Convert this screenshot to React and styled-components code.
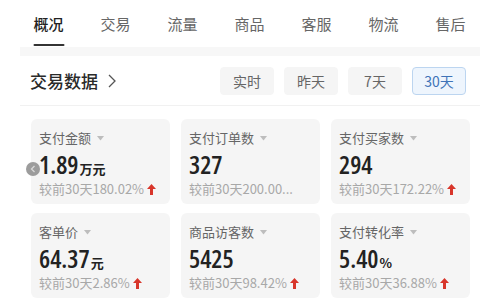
import React from "react";
import styled, { createGlobalStyle } from "styled-components";

const Global = createGlobalStyle`
  html, body { margin: 0; padding: 0; background: #fff; }
  body { font-family: "Noto Sans CJK SC", "Noto Sans", sans-serif; }
  * { box-sizing: border-box; }
`;

const Page = styled.div`
  position: relative;
  width: 480px;
  height: 300px;
  overflow: hidden;
  background: #fff;
`;

const Tabs = styled.div`
  display: flex;
  height: 47px;
  padding-left: 15px;
`;

const Tab = styled.div`
  position: relative;
  width: 67px;
  flex: none;
  display: flex;
  justify-content: center;
  align-items: center;
  padding-bottom: 1px;
  font-size: 15px;
  color: ${(p) => (p.$active ? "#222" : "#666")};
  font-weight: ${(p) => (p.$active ? 500 : 400)};
  &::after {
    content: "";
    display: ${(p) => (p.$active ? "block" : "none")};
    position: absolute;
    left: 50%;
    transform: translateX(-50%);
    bottom: 1px;
    width: 31px;
    height: 2px;
    border-radius: 1px;
    background: #333;
  }
`;

const Body = styled.div`
  margin-left: 20px;
  padding-top: 9px;
  background: #f7f7f7;
`;

const Section = styled.div`
  background: #fff;
  height: 244px;
`;

const Header = styled.div`
  display: flex;
  align-items: center;
  justify-content: space-between;
  height: 50px;
  padding: 0 14px 0 10px;
  border-bottom: 1px solid #f1f1f1;
`;

const Title = styled.div`
  display: flex;
  align-items: center;
  gap: 10px;
  font-size: 17px;
  font-weight: 500;
  color: #2a2a2a;
`;

const Periods = styled.div`
  display: flex;
  gap: 10px;
`;

const Period = styled.div`
  width: 54px;
  height: 28px;
  border-radius: 4px;
  display: flex;
  align-items: center;
  justify-content: center;
  font-size: 14px;
  background: ${(p) => (p.$active ? "#eef5fd" : "#f5f5f5")};
  border: 1px solid ${(p) => (p.$active ? "#bcd5f0" : "#f5f5f5")};
  color: ${(p) => (p.$active ? "#3f73b8" : "#666")};
`;

const Grid = styled.div`
  display: grid;
  grid-template-columns: repeat(3, 139px);
  grid-auto-rows: 85px;
  column-gap: 11px;
  row-gap: 9px;
  padding: 13px 0 0 11px;
`;

const Card = styled.div`
  background: #f5f5f5;
  border-radius: 6px;
  padding: 10px 8px 0 8px;
  display: flex;
  flex-direction: column;
`;

const Label = styled.div`
  display: flex;
  align-items: center;
  gap: 6px;
  height: 18px;
  font-size: 13px;
  color: #666;
  line-height: 18px;
`;

const Value = styled.div`
  margin-top: 3px;
  height: 28px;
  line-height: 28px;
  font-family: "Open Sans", "Noto Sans", sans-serif;
  font-stretch: 75%;
  font-weight: 600;
  font-size: 25px;
  color: #222;
  white-space: nowrap;
`;

const Unit = styled.span`
  font-family: "Noto Sans CJK SC", sans-serif;
  font-stretch: normal;
  font-size: 13px;
  font-weight: 700;
  margin-left: 1px;
`;

const Compare = styled.div`
  display: flex;
  align-items: center;
  gap: 3px;
  margin-top: 2px;
  height: 18px;
  font-size: 13px;
  color: #a8a8a8;
  white-space: nowrap;
  line-height: 18px;
`;

const Back = styled.div`
  position: absolute;
  left: 26px;
  top: 162px;
  width: 14px;
  height: 14px;
  border-radius: 50%;
  background: #9c9c9c;
  display: flex;
  align-items: center;
  justify-content: center;
`;

const Caret = () => (
  <svg width="7" height="5" viewBox="0 0 7 5">
    <path d="M0 0 H7 L3.5 4.5 Z" fill="#bdbdbd" />
  </svg>
);

const Up = () => (
  <svg width="9" height="11" viewBox="0 0 9 11">
    <path d="M4.5 0 L9 5 H6 V11 H3 V5 H0 Z" fill="#d8362b" />
  </svg>
);

const Chevron = () => (
  <svg width="8" height="14" viewBox="0 0 8 14">
    <path d="M1 1 L7 7 L1 13" fill="none" stroke="#555" strokeWidth="1.3" />
  </svg>
);

const tabs = ["概况", "交易", "流量", "商品", "客服", "物流", "售后"];
const periods = ["实时", "昨天", "7天", "30天"];
const cards = [
  { label: "支付金额", value: "1.89", unit: "万元", cmp: "较前30天180.02%", up: true },
  { label: "支付订单数", value: "327", cmp: "较前30天200.00...", up: false },
  { label: "支付买家数", value: "294", cmp: "较前30天172.22%", up: true },
  { label: "客单价", value: "64.37", unit: "元", cmp: "较前30天2.86%", up: true },
  { label: "商品访客数", value: "5425", cmp: "较前30天98.42%", up: true },
  { label: "支付转化率", value: "5.40", unit: "%", cmp: "较前30天36.88%", up: true },
];

export default function App() {
  return (
    <Page>
      <Global />
      <Tabs>
        {tabs.map((t, i) => (
          <Tab key={t} $active={i === 0}>{t}</Tab>
        ))}
      </Tabs>
      <Body>
        <Section>
          <Header>
            <Title>
              交易数据
              <Chevron />
            </Title>
            <Periods>
              {periods.map((p, i) => (
                <Period key={p} $active={i === 3}>{p}</Period>
              ))}
            </Periods>
          </Header>
          <Grid>
            {cards.map((c) => (
              <Card key={c.label}>
                <Label>
                  {c.label}
                  <Caret />
                </Label>
                <Value>
                  {c.value}
                  {c.unit && <Unit>{c.unit}</Unit>}
                </Value>
                <Compare>
                  {c.cmp}
                  {c.up && <Up />}
                </Compare>
              </Card>
            ))}
          </Grid>
        </Section>
      </Body>
      <Back>
        <svg width="6" height="8" viewBox="0 0 6 8">
          <path d="M4.5 1 L1.5 4 L4.5 7" fill="none" stroke="#d8d8d8" strokeWidth="1.3" />
        </svg>
      </Back>
    </Page>
  );
}
